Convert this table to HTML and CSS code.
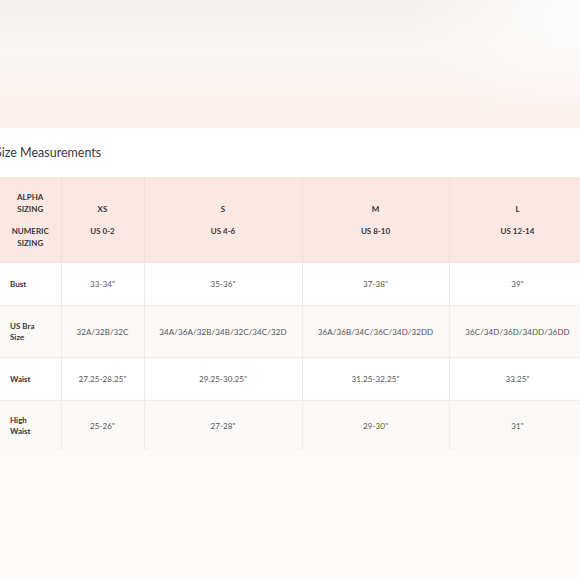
FILE: index.html
```html
<!DOCTYPE html>
<html>
<head>
<meta charset="utf-8">
<link rel="stylesheet" href="styles.css">
</head>
<body>
<div class="hero"></div>
<section class="panel">
  <h2 class="title">Size Measurements</h2>
  <table class="sizes">
    <colgroup>
      <col class="c0"><col class="c1"><col class="c2"><col class="c3"><col class="c4">
    </colgroup>
    <thead>
      <tr>
        <th class="label-head"><div class="top">ALPHA<br>SIZING</div><div class="bot">NUMERIC<br>SIZING</div></th>
        <th><div class="top">XS</div><div class="bot">US 0-2</div></th>
        <th><div class="top">S</div><div class="bot">US 4-6</div></th>
        <th><div class="top">M</div><div class="bot">US 8-10</div></th>
        <th><div class="top">L</div><div class="bot">US 12-14</div></th>
      </tr>
    </thead>
    <tbody>
      <tr class="r-short">
        <th>Bust</th><td>33-34"</td><td>35-36"</td><td>37-38"</td><td>39"</td>
      </tr>
      <tr class="r-tall alt">
        <th>US Bra<br>Size</th><td>32A/32B/32C</td><td>34A/36A/32B/34B/32C/34C/32D</td><td>36A/36B/34C/36C/34D/32DD</td><td>36C/34D/36D/34DD/36DD</td>
      </tr>
      <tr class="r-short">
        <th>Waist</th><td>27.25-28.25"</td><td>29.25-30.25"</td><td>31.25-32.25"</td><td>33.25"</td>
      </tr>
      <tr class="r-tall2 alt">
        <th>High<br>Waist</th><td>25-26"</td><td>27-28"</td><td>29-30"</td><td>31"</td>
      </tr>
    </tbody>
  </table>
</section>
</body>
</html>
```

FILE: styles.css
```css
html, body {
  margin: 0;
  padding: 0;
}
body {
  width: 580px;
  height: 580px;
  overflow: hidden;
  background: #fcfbfa;
  font-family: "Lato", "Liberation Sans", sans-serif;
  color: #444;
}
.hero {
  height: 128px;
  background:
    radial-gradient(ellipse 180px 120px at 100% 0%, rgba(255,255,255,0.85), rgba(255,255,255,0)),
    linear-gradient(to bottom, #f3f1ee 0%, #f9f7f5 35%, #fcf3f0 75%, #fcf0ec 100%);
}
.panel {
  background: #fff;
}
.title {
  margin: 0 0 0 -5px;
  height: 49px;
  line-height: 49px;
  font-size: 12.5px;
  font-weight: 400;
  color: #3a3a3a;
}
.sizes {
  border-collapse: collapse;
  table-layout: fixed;
  width: 586px;
  font-size: 8px;
}
.c0 { width: 61px; }
.c1 { width: 83px; }
.c2 { width: 158px; }
.c3 { width: 147px; }
.c4 { width: 137px; }
.sizes th, .sizes td {
  border-right: 1px solid #f1ebe8;
  border-bottom: 1px solid #f1ebe8;
  padding: 0;
  text-align: center;
  vertical-align: middle;
}
.sizes thead th {
  background: #fce8e3;
  height: 85px;
  font-weight: 700;
  color: #3a3535;
  line-height: 12px;
  border-right-color: #f6dfd9;
  border-bottom-color: #f6e1db;
}
.sizes thead th .top,
.sizes thead th .bot {
  height: 24px;
  display: flex;
  flex-direction: column;
  align-items: center;
}
.sizes thead th .top { justify-content: flex-end; margin-bottom: 10px; }
.sizes thead th .bot { justify-content: flex-start; }
.sizes tbody th {
  text-align: left;
  padding-left: 10px;
  font-weight: 700;
  color: #3a3535;
  line-height: 11px;
}
.sizes tbody td {
  color: #555;
  letter-spacing: 0.1px;
}
.r-short th, .r-short td { height: 42px; }
.r-tall th, .r-tall td { height: 51px; }
.r-tall2 th, .r-tall2 td { height: 49px; border-bottom: none; }
.alt th, .alt td { background: #fbf9f7; }
```
